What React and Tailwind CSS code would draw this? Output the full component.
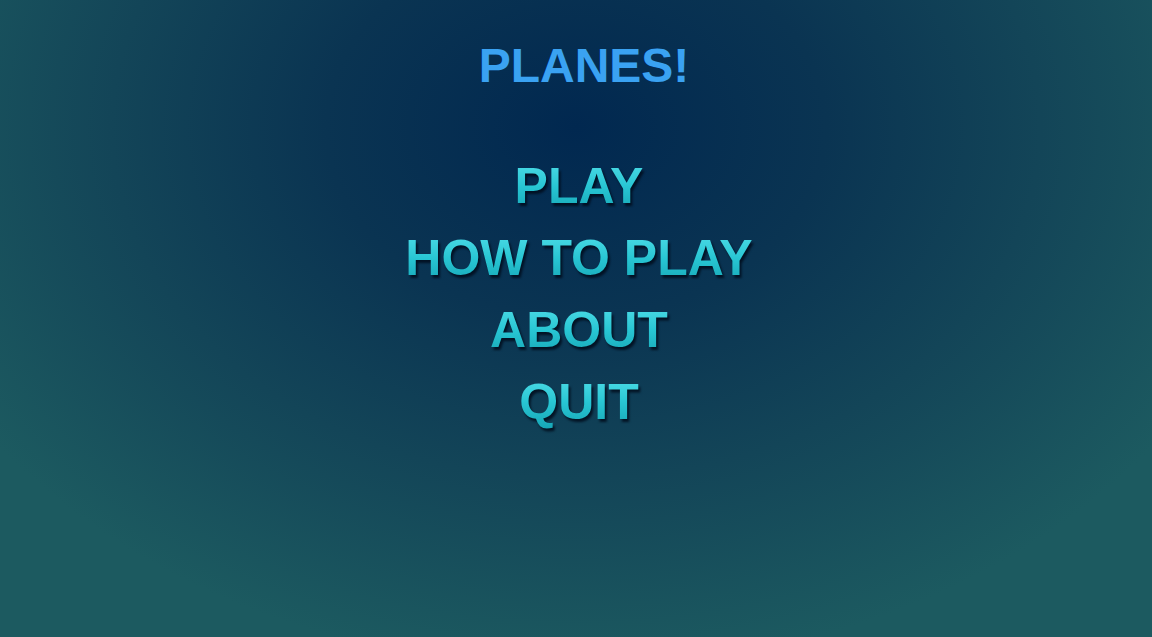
import React from "react";

const items = ["PLAY", "HOW TO PLAY", "ABOUT", "QUIT"];

export default function App() {
  return (
    <div className="w-full h-[637px] overflow-hidden bg-[radial-gradient(ellipse_62%_85%_at_50%_20%,#012850_0%,#0a3452_35%,#134558_65%,#1c5a60_100%)] font-['Liberation_Sans',Arial,sans-serif]">
      <div className="flex flex-col items-center pt-[38px] pl-[6px]">
        <h1 className="text-[48px] leading-[56px] font-bold text-[#3aa2f2] ml-[10px]">
          PLANES!
        </h1>

        {/* menu */}
        <div className="flex flex-col items-center mt-[56px]">
          {items.map((item) => (
            <button
              key={item}
              className="text-[50px] leading-[72px] font-bold bg-gradient-to-b from-[#58e6ef] via-[#28c6d4] to-[#0e9cac] bg-clip-text text-transparent [filter:drop-shadow(2px_3px_1px_rgba(0,10,25,0.8))]"
            >
              {item}
            </button>
          ))}
        </div>
      </div>
    </div>
  );
}
